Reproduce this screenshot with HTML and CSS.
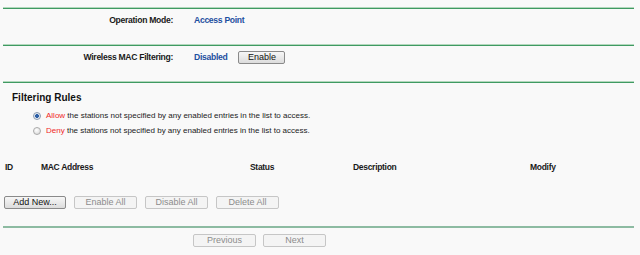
FILE: index.html
```html
<!DOCTYPE html>
<html>
<head>
<meta charset="utf-8">
<link rel="stylesheet" href="styles.css">
</head>
<body>
<div class="page">
  <div class="rule"></div>
  <div class="field">
    <span class="label">Operation Mode:</span>
    <span class="value">Access Point</span>
  </div>
  <div class="rule"></div>
  <div class="field">
    <span class="label">Wireless MAC Filtering:</span>
    <span class="value">Disabled</span>
    <button class="btn btn-enable">Enable</button>
  </div>
  <div class="rule"></div>
  <h2 class="title">Filtering Rules</h2>
  <div class="options">
    <label class="opt"><span class="radio checked"></span><span class="red">Allow</span>&nbsp;the stations not specified by any enabled entries in the list to access.</label>
    <label class="opt"><span class="radio"></span><span class="red">Deny</span>&nbsp;the stations not specified by any enabled entries in the list to access.</label>
  </div>
  <div class="thead">
    <span class="c-id">ID</span>
    <span class="c-mac">MAC Address</span>
    <span class="c-status">Status</span>
    <span class="c-desc">Description</span>
    <span class="c-mod">Modify</span>
  </div>
  <div class="actions">
    <button class="btn">Add New...</button>
    <button class="btn off">Enable All</button>
    <button class="btn off">Disable All</button>
    <button class="btn off">Delete All</button>
  </div>
  <div class="rule rule-soft"></div>
  <div class="pager">
    <button class="btn off">Previous</button>
    <button class="btn off">Next</button>
  </div>
</div>
</body>
</html>
```

FILE: styles.css
```css
html, body {
  margin: 0;
  padding: 0;
  background: #f9f9f9;
  font-family: "Liberation Sans", Arial, sans-serif;
  font-size: 8px;
  color: #222;
}
.page {
  width: 631px;
  margin-left: 3px;
  padding-top: 7px;
}
.rule {
  height: 1px;
  background: #3f9a62;
  border-top: 1px solid #b3d8bd;
}
.rule-soft {
  height: 2px;
  border-top: none;
  background: #8dbba2;
  margin-top: 17px;
}
.field {
  display: flex;
  align-items: flex-start;
  height: 35px;
  padding: 5px 0 7px;
  box-sizing: border-box;
  line-height: 13px;
  font-weight: bold;
  font-size: 8.6px;
  letter-spacing: -0.3px;
}
.label {
  width: 170px;
  text-align: right;
  color: #1a1a1a;
}
.value {
  margin-left: 21px;
  color: #1e4fa0;
}
.btn {
  font-family: "Liberation Sans", Arial, sans-serif;
  font-size: 9px;
  letter-spacing: 0;
  height: 13px;
  width: 62px;
  padding: 0;
  box-sizing: border-box;
  border: 1px solid #8a8a8a;
  border-radius: 2px;
  background: linear-gradient(#f7f7f7, #dcdcdc);
  color: #111;
  line-height: 11px;
}
.btn.off {
  color: #8c8c8c;
  border-color: #c6c6c6;
  background: #f4f4f4;
}
.btn-enable {
  margin-left: 11px;
  width: 47px;
  font-weight: normal;
}
.title {
  margin: 9px 0 0 9px;
  font-size: 10px;
  font-weight: bold;
  color: #111;
  line-height: 12px;
}
.options {
  margin: 4px 0 0 30px;
}
.opt {
  display: flex;
  align-items: center;
  height: 15px;
  color: #222;
}
.red { color: #f02828; }
.radio {
  width: 8px;
  height: 8px;
  border-radius: 50%;
  border: 1px solid #aaa;
  background: radial-gradient(circle at 40% 35%, #fff, #d4d4d4);
  margin-right: 5px;
  box-sizing: border-box;
}
.radio.checked {
  border-color: #8c9bb0;
  background: radial-gradient(circle, #2d5fa6 0 1.6px, #dfe6ef 2.2px, #eef2f6 100%);
}
.thead {
  display: flex;
  margin-top: 23px;
  height: 12px;
  line-height: 12px;
  font-weight: bold;
  font-size: 8.5px;
  letter-spacing: -0.3px;
  color: #1a1a1a;
}
.thead span { display: block; }
.c-id { width: 36px; padding-left: 2px; }
.c-mac { width: 209px; }
.c-status { width: 103px; }
.c-desc { width: 177px; }
.actions {
  display: flex;
  gap: 8px;
  margin: 23px 0 0 1px;
}
.actions .btn:nth-child(n+2) { width: 63px; }
.pager {
  display: flex;
  gap: 7px;
  margin: 6px 0 0 190px;
}
.pager .btn { width: 63px; }
```
